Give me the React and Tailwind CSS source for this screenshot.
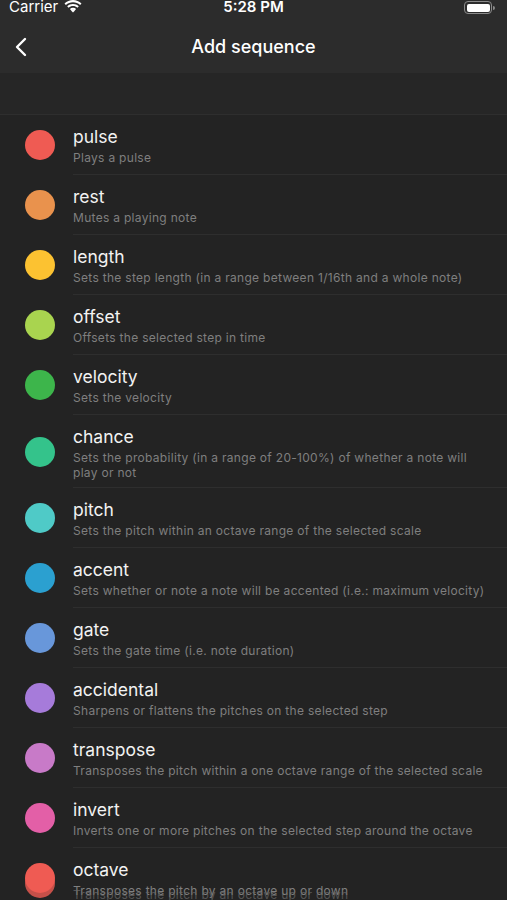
// Add sequence — list of step modifiers, dark iOS table style
const ITEMS = [
  { name: 'pulse', desc: 'Plays a pulse', color: 'bg-[#ef5b53]' },
  { name: 'rest', desc: 'Mutes a playing note', color: 'bg-[#e9924d]' },
  { name: 'length', desc: 'Sets the step length (in a range between 1/16th and a whole note)', color: 'bg-[#fcc231]' },
  { name: 'offset', desc: 'Offsets the selected step in time', color: 'bg-[#a9d44f]' },
  { name: 'velocity', desc: 'Sets the velocity', color: 'bg-[#3db54b]' },
  { name: 'chance', desc: 'Sets the probability (in a range of 20-100%) of whether a note will play or not', color: 'bg-[#34c38b]', tall: true },
  { name: 'pitch', desc: 'Sets the pitch within an octave range of the selected scale', color: 'bg-[#4fcac7]' },
  { name: 'accent', desc: 'Sets whether or note a note will be accented (i.e.: maximum velocity)', color: 'bg-[#2ba0d0]' },
  { name: 'gate', desc: 'Sets the gate time (i.e. note duration)', color: 'bg-[#6897da]' },
  { name: 'accidental', desc: 'Sharpens or flattens the pitches on the selected step', color: 'bg-[#a67bda]' },
  { name: 'transpose', desc: 'Transposes the pitch within a one octave range of the selected scale', color: 'bg-[#c87ac8]' },
  { name: 'invert', desc: 'Inverts one or more pitches on the selected step around the octave', color: 'bg-[#e35fa7]' },
  { name: 'octave', desc: 'Transposes the pitch by an octave up or down', color: 'bg-[#ef5b53]', ghost: true },
];

function StatusBar() {
  return (
    <div className="relative flex h-[19px] items-start justify-between px-[9px] text-[15px] leading-[15px] text-white">
      <div className="flex items-center gap-[6px] -mt-[1px]">
        <span>Carrier</span>
        <svg width="18" height="13" viewBox="0 0 18 13" fill="white">
          <path d="M9 2.2c2.7 0 5.2 1 7.1 2.8l1.4-1.5C15.2 1.3 12.2 0 9 0S2.8 1.3.5 3.5l1.4 1.5C3.8 3.2 6.3 2.2 9 2.2z" />
          <path d="M9 6c1.7 0 3.2.6 4.4 1.7l1.4-1.5C13.2 4.7 11.2 3.9 9 3.9S4.8 4.7 3.2 6.2l1.4 1.5C5.8 6.6 7.3 6 9 6z" />
          <path d="M9 9.6c.8 0 1.5.3 2 .8L9 12.6l-2-2.2c.5-.5 1.2-.8 2-.8z" />
          <path d="M9 7.8c1.2 0 2.3.4 3.1 1.2l-1.3 1.4c-.5-.4-1.1-.7-1.8-.7s-1.300.3-1.8.7L5.9 9c.8-.8 1.9-1.2 3.1-1.2z" />
        </svg>
      </div>
      <span className="absolute left-0 right-0 top-0 -mt-[1px] text-center font-semibold">5:28 PM</span>
      <div className="mt-[1px] mr-[3px] flex items-center">
        <div className="flex h-[13px] w-[28px] items-center rounded-[4px] border border-[#8a8a8a] p-[1.5px]">
          <div className="h-full w-full rounded-[2px] bg-white" />
        </div>
        <div className="ml-[1px] h-[4px] w-[2px] rounded-r-sm bg-[#8a8a8a]" />
      </div>
    </div>
  );
}

function NavBar() {
  return (
    <div className="relative flex h-[54px] items-center justify-center bg-[#2c2c2c]">
      <svg className="absolute left-[13px] top-[18px]" width="16" height="20" viewBox="0 0 16 20" fill="none" stroke="white" strokeWidth="2.4" strokeLinecap="round" strokeLinejoin="round">
        <path d="M12 2 4 10l8 8" />
      </svg>
      <span className="text-[18px] font-medium text-white">Add sequence</span>
    </div>
  );
}

function Row({ item }) {
  return (
    <div className={`flex items-stretch ${item.tall ? 'h-[73px]' : 'h-[60px]'}`}>
      <div className="relative flex w-[73px] shrink-0 items-center pl-[25px]">
        {item.ghost && (
          <div className={`absolute left-[25px] top-[20px] h-[30px] w-[30px] rounded-full ${item.color} opacity-80`} />
        )}
        <div className={`relative h-[30px] w-[30px] rounded-full ${item.color}`} />
      </div>
      <div className="relative flex flex-1 flex-col border-b border-[#2e2e2e] pt-[11px] pr-[12px]">
        <div className="text-[17.5px] leading-[22px] text-[#f2f2f2]">{item.name}</div>
        <div className="relative mt-[2px] text-[12px] leading-[15px] tracking-[0.3px] text-[#7f7f7f]">
          {item.desc}
          {item.ghost && (
            <div className="absolute left-0 top-[4px] text-[#6a6a6a] opacity-70">{item.desc}</div>
          )}
        </div>
      </div>
    </div>
  );
}

export default function App() {
  return (
    <div className="h-[900px] w-full overflow-hidden bg-[#232323]" style={{ fontFamily: 'Inter, "Noto Sans", sans-serif' }}>
      <div className="bg-[#2c2c2c]">
        <StatusBar />
        <NavBar />
      </div>
      <div className="h-[42px] border-b border-[#2e2e2e] bg-[#262626]" />
      <div>
        {ITEMS.map((item) => (
          <Row key={item.name} item={item} />
        ))}
      </div>
    </div>
  );
}
